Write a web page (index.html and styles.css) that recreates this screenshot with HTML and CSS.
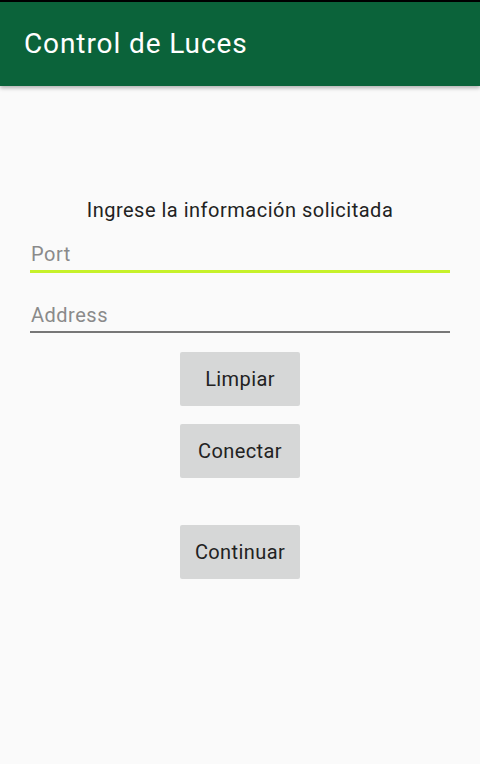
FILE: index.html
```html
<!DOCTYPE html>
<html>
<head>
<meta charset="utf-8">
<link rel="stylesheet" href="styles.css">
</head>
<body>
<div class="status"></div>
<header class="toolbar"><h1 class="title">Control de Luces</h1></header>
<main class="content">
  <p class="prompt">Ingrese la información solicitada</p>
  <div class="field focused"><span class="hint">Port</span></div>
  <div class="field"><span class="hint">Address</span></div>
  <div class="buttons">
    <button class="btn">Limpiar</button>
    <button class="btn">Conectar</button>
    <button class="btn spaced">Continuar</button>
  </div>
</main>
</body>
</html>
```
FILE: styles.css
```css
html, body {
  margin: 0;
  padding: 0;
  height: 100%;
  background: #fafafa;
  font-family: Roboto, "Noto Sans", sans-serif;
}
.status {
  height: 2px;
  background: #000;
}
.toolbar {
  height: 84px;
  background: #0b633a;
  display: flex;
  align-items: center;
  padding-left: 24px;
  box-shadow: 0 2px 4px rgba(0,0,0,0.3);
  position: relative;
}
.title {
  margin: 0;
  margin-top: -2px;
  font-size: 28px;
  font-weight: 400;
  letter-spacing: 0.9px;
  color: #fff;
}
.content {
  padding: 110px 30px 0;
  display: flex;
  flex-direction: column;
}
.prompt {
  margin: 0;
  text-align: center;
  font-size: 20px;
  letter-spacing: 0.5px;
  color: #222;
  line-height: 28px;
}
.field {
  height: 32px;
  display: flex;
  align-items: flex-end;
  border-bottom: 2px solid #777;
  padding-bottom: 5px;
  margin-top: 8px;
}
.field.focused {
  border-bottom: 3px solid #c6f12a;
  padding-bottom: 5px;
  margin-top: 9px;
}
.field + .field {
  margin-top: 21px;
}
.hint {
  font-size: 20px;
  letter-spacing: 0.5px;
  color: #8a8a8a;
  padding-left: 1px;
  line-height: 22px;
}
.buttons {
  display: flex;
  flex-direction: column;
  align-items: center;
  gap: 18px;
  margin-top: 19px;
}
.btn {
  width: 120px;
  height: 54px;
  border: none;
  border-radius: 2px;
  background: #d6d7d7;
  font-family: Roboto, "Noto Sans", sans-serif;
  font-size: 20px;
  letter-spacing: 0.4px;
  color: #222;
  padding: 0;
}
.btn.spaced {
  margin-top: 29px;
}
```
